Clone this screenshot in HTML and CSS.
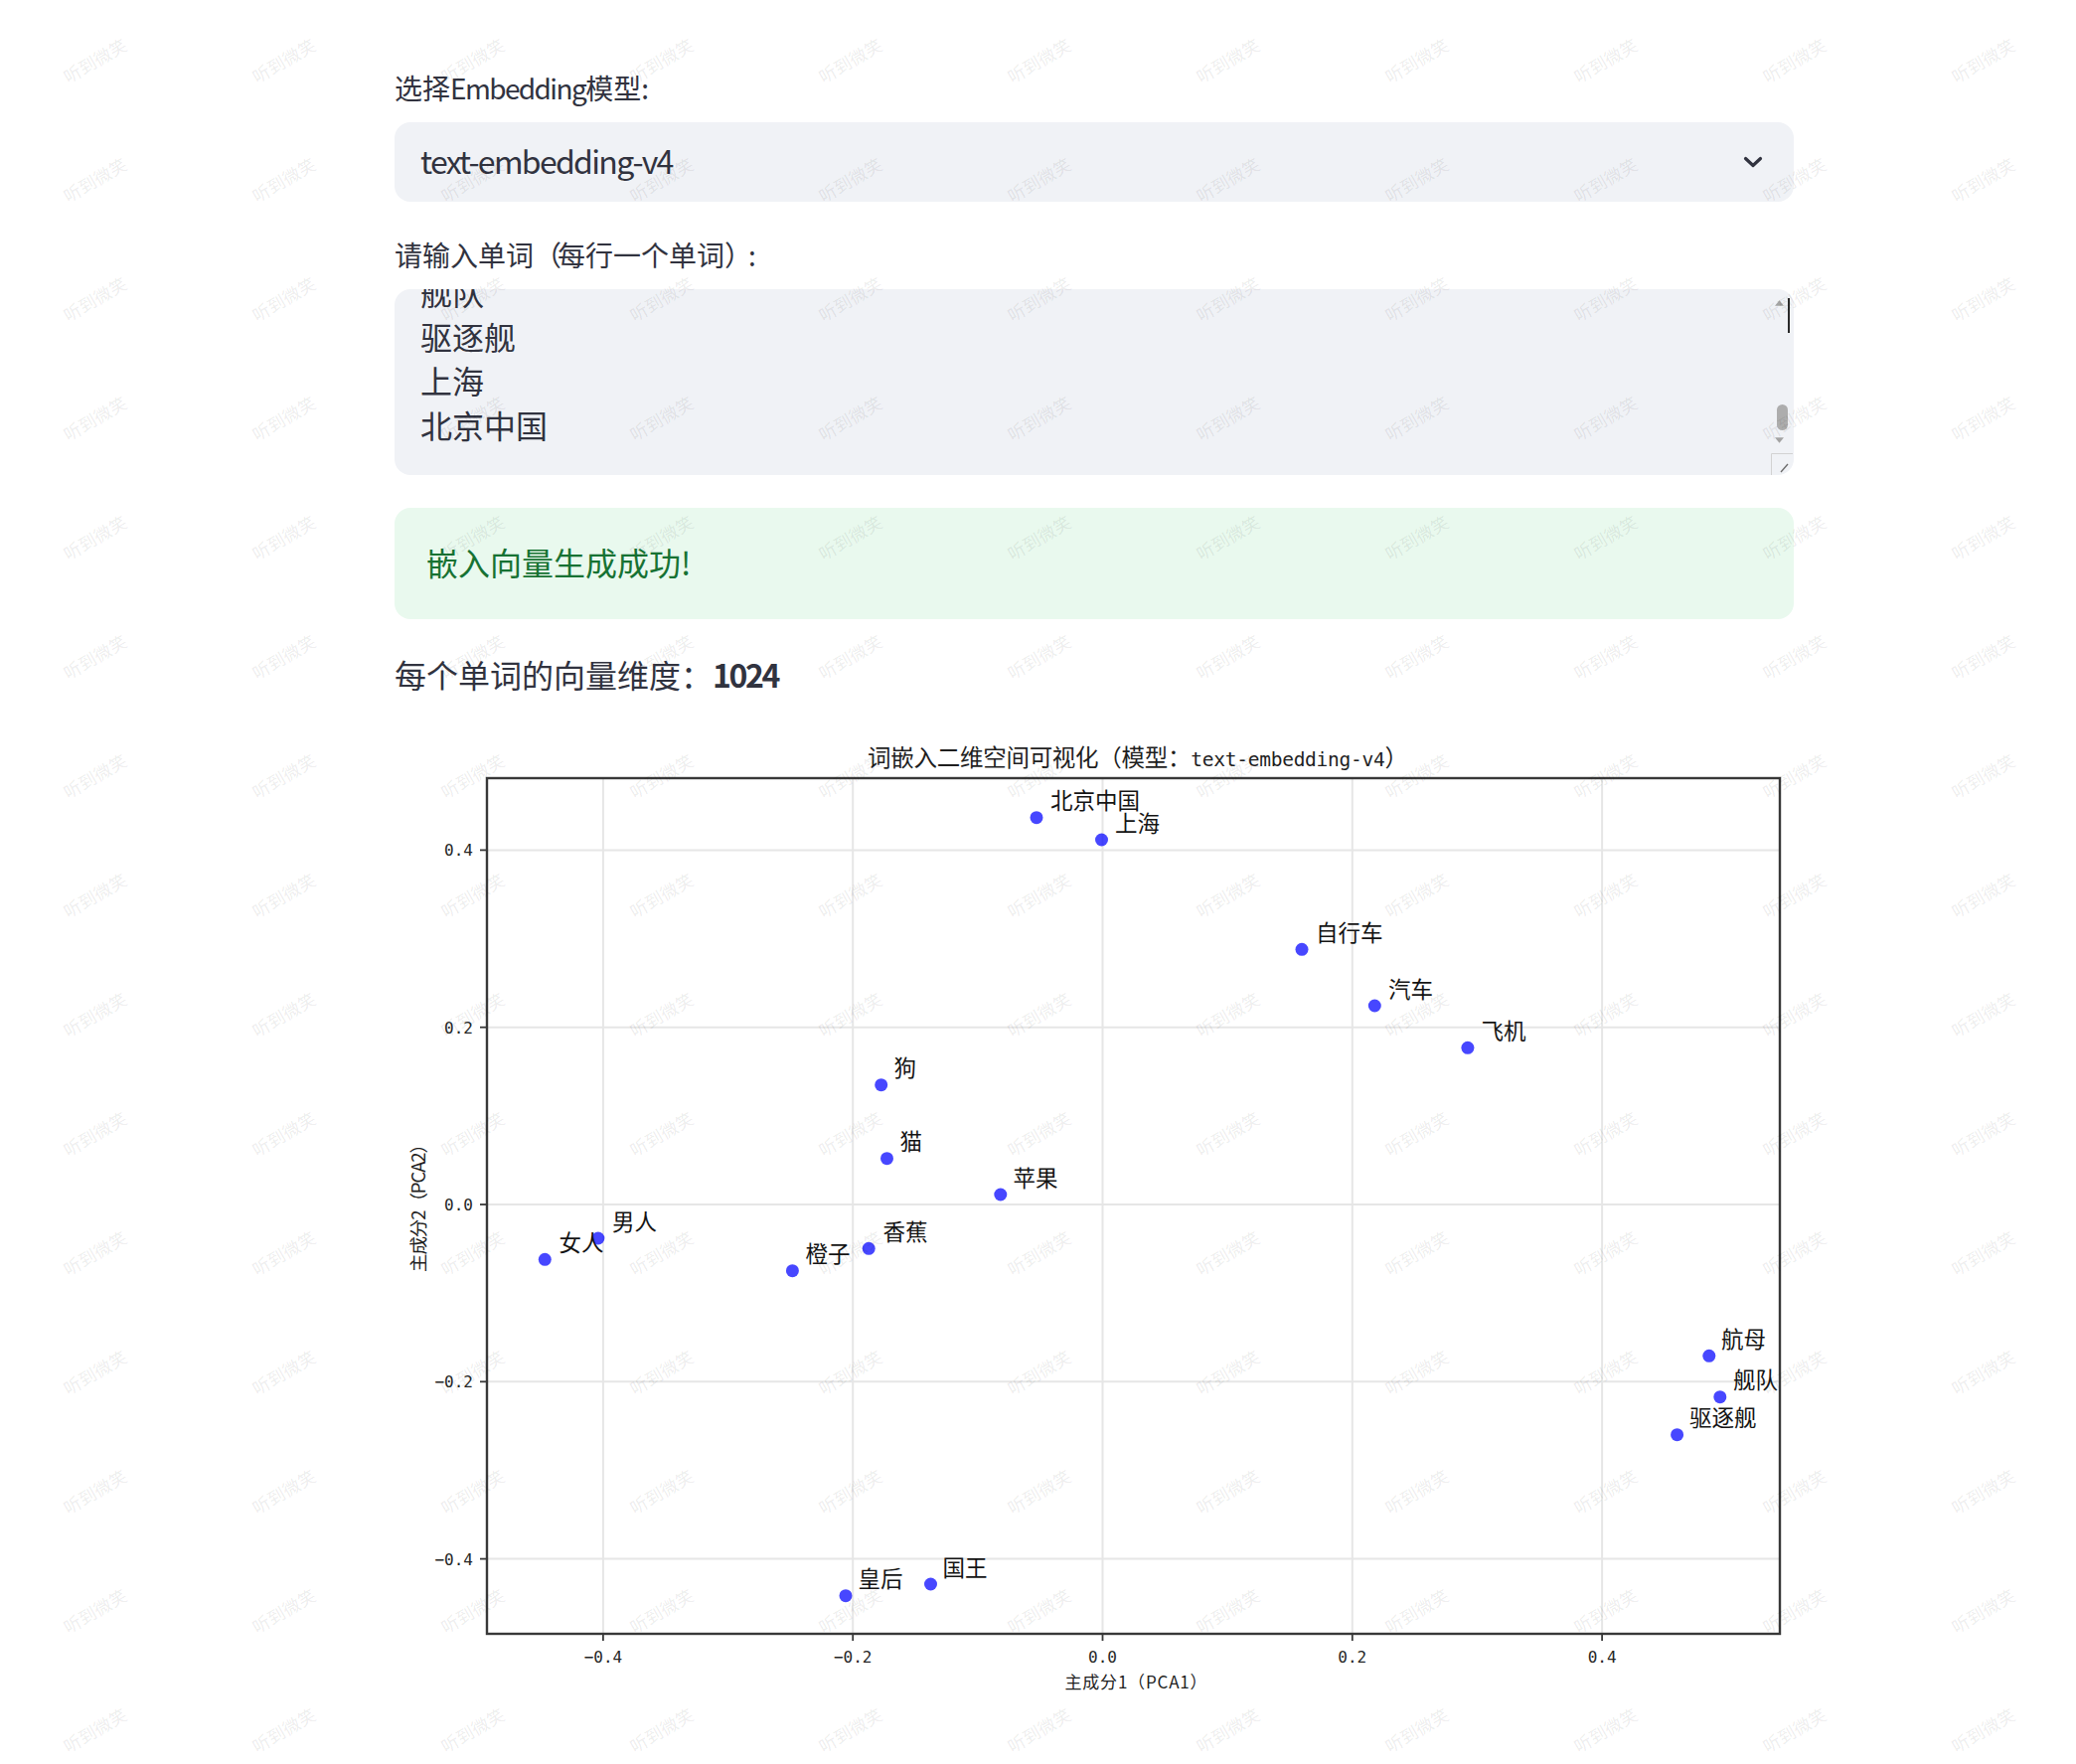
FILE: index.html
```html
<!DOCTYPE html>
<html lang="zh-CN">
<head>
<meta charset="utf-8">
<title>词嵌入可视化</title>
<link rel="stylesheet" href="styles.css">
</head>
<body>
<main class="main">
  <div class="label">选择<span class="latin">Embedding</span>模型<span class="latin">:</span></div>
  <div class="select">
    <span class="select-value">text-embedding-v4</span>
    <svg class="chevron" viewBox="0 0 20 12"><path d="M2.5 2.5 L10 9.5 L17.5 2.5"/></svg>
  </div>

  <div class="label label-second">请输入单词<span class="punct">（</span>每行一个单词<span class="punct">）</span><span class="latin">:</span></div>
  <div class="textarea">
    <div class="line">男人</div>
    <div class="line">女人</div>
    <div class="line">国王</div>
    <div class="line">皇后</div>
    <div class="line">猫</div>
    <div class="line">狗</div>
    <div class="line">苹果</div>
    <div class="line">香蕉</div>
    <div class="line">橙子</div>
    <div class="line">汽车</div>
    <div class="line">自行车</div>
    <div class="line">飞机</div>
    <div class="line">航母</div>
    <div class="line">舰队</div>
    <div class="line">驱逐舰</div>
    <div class="line">上海</div>
    <div class="line">北京中国</div>
    <span class="sb-caret"></span>
    <svg class="sb-up" viewBox="0 0 10 6"><path d="M0 6 L5 0 L10 6 Z"/></svg>
    <span class="sb-thumb"></span>
    <svg class="sb-down" viewBox="0 0 10 6"><path d="M0 0 L10 0 L5 6 Z"/></svg>
    <svg class="sb-resize" viewBox="0 0 22 22"><path class="rs-box" d="M0.5 22 L0.5 0.5 L22 0.5"/><path class="rs-diag" d="M10 19 L17 11"/></svg>
  </div>

  <div class="success">嵌入向量生成成功!</div>

  <p class="metric">每个单词的向量维度：<strong>1024</strong></p>

  <svg class="chart" width="1408" height="1000" viewBox="397 737 1408 1000">
    <g class="grid">
      <line x1="606.9" y1="783" x2="606.9" y2="1644"/>
      <line x1="858.2" y1="783" x2="858.2" y2="1644"/>
      <line x1="1109.5" y1="783" x2="1109.5" y2="1644"/>
      <line x1="1360.8" y1="783" x2="1360.8" y2="1644"/>
      <line x1="1612.1" y1="783" x2="1612.1" y2="1644"/>
      <line x1="490" y1="855.4" x2="1791" y2="855.4"/>
      <line x1="490" y1="1033.7" x2="1791" y2="1033.7"/>
      <line x1="490" y1="1212" x2="1791" y2="1212"/>
      <line x1="490" y1="1390.3" x2="1791" y2="1390.3"/>
      <line x1="490" y1="1568.6" x2="1791" y2="1568.6"/>
    </g>
    <rect class="frame" x="490" y="783" width="1301" height="861"/>
    <g class="ticks">
      <line x1="606.9" y1="1644" x2="606.9" y2="1651"/>
      <line x1="858.2" y1="1644" x2="858.2" y2="1651"/>
      <line x1="1109.5" y1="1644" x2="1109.5" y2="1651"/>
      <line x1="1360.8" y1="1644" x2="1360.8" y2="1651"/>
      <line x1="1612.1" y1="1644" x2="1612.1" y2="1651"/>
      <line x1="483" y1="855.4" x2="490" y2="855.4"/>
      <line x1="483" y1="1033.7" x2="490" y2="1033.7"/>
      <line x1="483" y1="1212" x2="490" y2="1212"/>
      <line x1="483" y1="1390.3" x2="490" y2="1390.3"/>
      <line x1="483" y1="1568.6" x2="490" y2="1568.6"/>
    </g>
    <g class="tick-label xt">
      <text x="606.9" y="1673">−0.4</text>
      <text x="858.2" y="1673">−0.2</text>
      <text x="1109.5" y="1673">0.0</text>
      <text x="1360.8" y="1673">0.2</text>
      <text x="1612.1" y="1673">0.4</text>
    </g>
    <g class="tick-label yt">
      <text x="476" y="861">0.4</text>
      <text x="476" y="1039.5">0.2</text>
      <text x="476" y="1218">0.0</text>
      <text x="476" y="1396">−0.2</text>
      <text x="476" y="1574.5">−0.4</text>
    </g>
    <text class="chart-title" x="1145" y="771" textLength="544">词嵌入二维空间可视化（模型：<tspan class="mono">text-embedding-v4</tspan>）</text>
    <text class="axis-label" x="1143" y="1699" textLength="143">主成分1（PCA1）</text>
    <text class="axis-label axis-label-y" transform="translate(428 1211) rotate(-90)" textLength="138">主成分2（PCA2）</text>

    <g class="dots">
      <circle cx="1043" cy="822.7" r="6.5"/>
      <circle cx="1108.5" cy="845" r="6.5"/>
      <circle cx="1310" cy="955.3" r="6.5"/>
      <circle cx="1383.3" cy="1012" r="6.5"/>
      <circle cx="1476.9" cy="1054.3" r="6.5"/>
      <circle cx="886.7" cy="1091.7" r="6.5"/>
      <circle cx="892.5" cy="1165.7" r="6.5"/>
      <circle cx="1006.8" cy="1202" r="6.5"/>
      <circle cx="601.9" cy="1246" r="6.5"/>
      <circle cx="548.3" cy="1267.3" r="6.5"/>
      <circle cx="874.2" cy="1256.3" r="6.5"/>
      <circle cx="797.4" cy="1278.7" r="6.5"/>
      <circle cx="1719.8" cy="1364.3" r="6.5"/>
      <circle cx="1730.8" cy="1405.7" r="6.5"/>
      <circle cx="1687.6" cy="1443.7" r="6.5"/>
      <circle cx="851" cy="1605.7" r="6.5"/>
      <circle cx="936.5" cy="1594" r="6.5"/>
    </g>
    <g class="point-label">
      <text x="1057" y="814">北京中国</text>
      <text x="1122" y="836.5">上海</text>
      <text x="1324" y="947">自行车</text>
      <text x="1397" y="1003.5">汽车</text>
      <text x="1490.5" y="1046">飞机</text>
      <text x="899.5" y="1083">狗</text>
      <text x="905.5" y="1157">猫</text>
      <text x="1019.5" y="1193.5">苹果</text>
      <text x="616" y="1237.5">男人</text>
      <text x="562.5" y="1259">女人</text>
      <text x="888.5" y="1247.5">香蕉</text>
      <text x="810.5" y="1270">橙子</text>
      <text x="1732" y="1355.5">航母</text>
      <text x="1744" y="1397">舰队</text>
      <text x="1700" y="1435">驱逐舰</text>
      <text x="863.5" y="1597">皇后</text>
      <text x="948.5" y="1585.5">国王</text>
    </g>
  </svg>
</main>

<div class="watermarks" aria-hidden="true">
<span>听到微笑</span><span>听到微笑</span><span>听到微笑</span><span>听到微笑</span><span>听到微笑</span><span>听到微笑</span><span>听到微笑</span><span>听到微笑</span><span>听到微笑</span><span>听到微笑</span><span>听到微笑</span>
<span>听到微笑</span><span>听到微笑</span><span>听到微笑</span><span>听到微笑</span><span>听到微笑</span><span>听到微笑</span><span>听到微笑</span><span>听到微笑</span><span>听到微笑</span><span>听到微笑</span><span>听到微笑</span>
<span>听到微笑</span><span>听到微笑</span><span>听到微笑</span><span>听到微笑</span><span>听到微笑</span><span>听到微笑</span><span>听到微笑</span><span>听到微笑</span><span>听到微笑</span><span>听到微笑</span><span>听到微笑</span>
<span>听到微笑</span><span>听到微笑</span><span>听到微笑</span><span>听到微笑</span><span>听到微笑</span><span>听到微笑</span><span>听到微笑</span><span>听到微笑</span><span>听到微笑</span><span>听到微笑</span><span>听到微笑</span>
<span>听到微笑</span><span>听到微笑</span><span>听到微笑</span><span>听到微笑</span><span>听到微笑</span><span>听到微笑</span><span>听到微笑</span><span>听到微笑</span><span>听到微笑</span><span>听到微笑</span><span>听到微笑</span>
<span>听到微笑</span><span>听到微笑</span><span>听到微笑</span><span>听到微笑</span><span>听到微笑</span><span>听到微笑</span><span>听到微笑</span><span>听到微笑</span><span>听到微笑</span><span>听到微笑</span><span>听到微笑</span>
<span>听到微笑</span><span>听到微笑</span><span>听到微笑</span><span>听到微笑</span><span>听到微笑</span><span>听到微笑</span><span>听到微笑</span><span>听到微笑</span><span>听到微笑</span><span>听到微笑</span><span>听到微笑</span>
<span>听到微笑</span><span>听到微笑</span><span>听到微笑</span><span>听到微笑</span><span>听到微笑</span><span>听到微笑</span><span>听到微笑</span><span>听到微笑</span><span>听到微笑</span><span>听到微笑</span><span>听到微笑</span>
<span>听到微笑</span><span>听到微笑</span><span>听到微笑</span><span>听到微笑</span><span>听到微笑</span><span>听到微笑</span><span>听到微笑</span><span>听到微笑</span><span>听到微笑</span><span>听到微笑</span><span>听到微笑</span>
<span>听到微笑</span><span>听到微笑</span><span>听到微笑</span><span>听到微笑</span><span>听到微笑</span><span>听到微笑</span><span>听到微笑</span><span>听到微笑</span><span>听到微笑</span><span>听到微笑</span><span>听到微笑</span>
<span>听到微笑</span><span>听到微笑</span><span>听到微笑</span><span>听到微笑</span><span>听到微笑</span><span>听到微笑</span><span>听到微笑</span><span>听到微笑</span><span>听到微笑</span><span>听到微笑</span><span>听到微笑</span>
<span>听到微笑</span><span>听到微笑</span><span>听到微笑</span><span>听到微笑</span><span>听到微笑</span><span>听到微笑</span><span>听到微笑</span><span>听到微笑</span><span>听到微笑</span><span>听到微笑</span><span>听到微笑</span>
<span>听到微笑</span><span>听到微笑</span><span>听到微笑</span><span>听到微笑</span><span>听到微笑</span><span>听到微笑</span><span>听到微笑</span><span>听到微笑</span><span>听到微笑</span><span>听到微笑</span><span>听到微笑</span>
<span>听到微笑</span><span>听到微笑</span><span>听到微笑</span><span>听到微笑</span><span>听到微笑</span><span>听到微笑</span><span>听到微笑</span><span>听到微笑</span><span>听到微笑</span><span>听到微笑</span><span>听到微笑</span>
<span>听到微笑</span><span>听到微笑</span><span>听到微笑</span><span>听到微笑</span><span>听到微笑</span><span>听到微笑</span><span>听到微笑</span><span>听到微笑</span><span>听到微笑</span><span>听到微笑</span><span>听到微笑</span>
</div>
</body>
</html>
```
FILE: styles.css
```css
html, body {
  margin: 0;
  padding: 0;
  background: #ffffff;
  overflow: hidden;
}
body {
  position: relative;
  width: 2089px;
  height: 1775px;
  font-family: "Noto Sans CJK SC", "Noto Sans", sans-serif;
  color: #31333f;
}
.main {
  width: 1408px;
  margin-left: 397px;
  padding-top: 65px;
  display: flex;
  flex-direction: column;
}
.label {
  font-size: 28px;
  line-height: 47px;
  height: 50px;
  white-space: nowrap;
}
.latin {
  letter-spacing: -1.6px;
}
.punct {
  letter-spacing: -4px;
}
.label-second {
  margin-top: 30px;
}
.select {
  margin-top: 8px;
  height: 80px;
  box-sizing: border-box;
  background: #f0f2f6;
  border-radius: 16px;
  display: flex;
  align-items: center;
  justify-content: space-between;
  padding: 0 31px 0 26px;
}
.select-value {
  font-size: 32px;
  line-height: 44px;
  letter-spacing: -1.7px;
  margin-top: -5px;
}
.chevron {
  width: 20px;
  height: 12px;
}
.chevron path {
  fill: none;
  stroke: #31333f;
  stroke-width: 3.2;
  stroke-linecap: round;
  stroke-linejoin: round;
}
.textarea {
  position: relative;
  margin-top: 8px;
  height: 187px;
  box-sizing: border-box;
  background: #f0f2f6;
  border-radius: 16px;
  overflow: hidden;
  display: flex;
  flex-direction: column;
  justify-content: flex-end;
  padding: 0 40px 28px 26px;
  font-size: 32px;
  line-height: 44.8px;
}
.line {
  flex-shrink: 0;
  white-space: nowrap;
}
.sb-caret {
  position: absolute;
  right: 4px;
  top: 9px;
  width: 2px;
  height: 35px;
  background: #2a2a2a;
}
.sb-up, .sb-down {
  position: absolute;
  right: 10px;
  width: 9px;
  height: 6px;
}
.sb-up { top: 11px; }
.sb-down { top: 149px; }
.sb-up path, .sb-down path { fill: #a3a3a3; }
.sb-thumb {
  position: absolute;
  right: 6px;
  top: 116px;
  width: 11px;
  height: 26px;
  border-radius: 6px;
  background: #adadad;
}
.sb-resize {
  position: absolute;
  right: 1px;
  top: 165px;
  width: 22px;
  height: 22px;
}
.rs-box { fill: none; stroke: #d2d2d2; stroke-width: 1; }
.rs-diag { fill: none; stroke: #6b6b6b; stroke-width: 1.3; }
.success {
  margin-top: 33px;
  height: 112px;
  box-sizing: border-box;
  background: #e9f9ee;
  border-radius: 16px;
  display: flex;
  align-items: center;
  padding: 0 32px 5px 32px;
  font-size: 32px;
  line-height: 48px;
  color: #177233;
}
.metric {
  margin: 30px 0 0 0;
  font-size: 32px;
  line-height: 51.2px;
}
.metric strong {
  font-weight: 700;
  letter-spacing: -2.4px;
}
.chart {
  display: block;
  margin-top: 33px;
}
.grid line {
  stroke: #e6e6e6;
  stroke-width: 2;
}
.frame {
  fill: none;
  stroke: #383838;
  stroke-width: 2.4;
}
.ticks line {
  stroke: #383838;
  stroke-width: 1.8;
}
.tick-label text {
  font-family: "DejaVu Sans Mono", "Liberation Mono", monospace;
  font-size: 16px;
  fill: #262626;
}
.xt text { text-anchor: middle; }
.yt text { text-anchor: end; }
.chart-title {
  font-family: "Noto Sans CJK SC", sans-serif;
  font-size: 23.5px;
  fill: #1f1f1f;
  text-anchor: middle;
}
.mono {
  font-family: "DejaVu Sans Mono", "Liberation Mono", monospace;
  font-size: 19.5px;
}
.axis-label {
  font-family: "Noto Sans CJK SC", sans-serif;
  font-size: 17px;
  fill: #1f1f1f;
  text-anchor: middle;
}
.axis-label-y {
  font-size: 18.5px;
}
.dots circle {
  fill: #0000ff;
  fill-opacity: 0.72;
}
.point-label text {
  font-family: "Noto Sans CJK SC", sans-serif;
  font-size: 22.5px;
  fill: #141414;
}
.watermarks {
  position: absolute;
  top: 0;
  left: 0;
  width: 2089px;
  height: 1775px;
  overflow: hidden;
  display: grid;
  grid-template-columns: repeat(11, 190px);
  grid-auto-rows: 120px;
  pointer-events: none;
  z-index: 10;
}
.watermarks span {
  display: flex;
  align-items: center;
  justify-content: center;
  transform: rotate(-30deg);
  font-size: 17.5px;
  color: rgba(0, 0, 0, 0.085);
  white-space: nowrap;
}
```
